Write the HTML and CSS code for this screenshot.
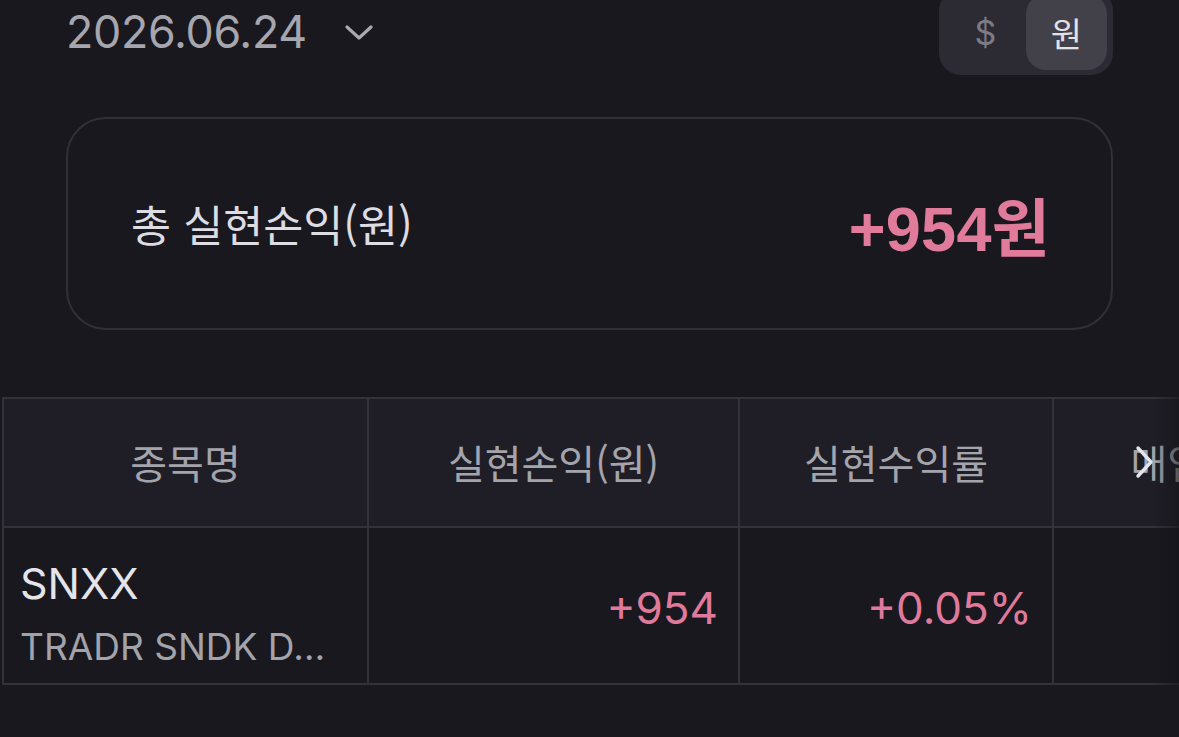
FILE: index.html
```html
<!DOCTYPE html>
<html lang="ko">
<head>
<meta charset="utf-8">
<title>실현손익</title>
<link rel="stylesheet" href="styles.css">
</head>
<body>
<main class="screen">
  <section class="summary">
    <div class="topbar">
      <button class="date-picker" type="button">
        <span class="date-text">2026.06.24</span>
        <svg class="chevron" width="28" height="16" viewBox="0 0 28 16" aria-hidden="true">
          <path d="M2 2 L14 13 L26 2" fill="none" stroke="currentColor" stroke-width="3.2" stroke-linecap="round" stroke-linejoin="round"/>
        </svg>
      </button>
      <div class="currency-toggle">
        <span class="currency">$</span>
        <span class="currency is-active">원</span>
      </div>
    </div>

    <div class="total-card">
      <span class="total-label">총 실현손익(원)</span>
      <span class="total-value">+954원</span>
    </div>
  </section>

  <section class="table-scroll">
    <div class="pl-table">
      <div class="cell head">종목명</div>
      <div class="cell head">실현손익(원)</div>
      <div class="cell head">실현수익률</div>
      <div class="cell head">매입금액(원)</div>

      <div class="cell name-cell">
        <span class="ticker">SNXX</span>
        <span class="fund-name">TRADR SNDK DAILY 2X ETF</span>
      </div>
      <div class="cell num gain">+954</div>
      <div class="cell num gain">+0.05%</div>
      <div class="cell num"></div>
    </div>
    <svg class="scroll-hint" width="22" height="34" viewBox="0 0 22 34" aria-hidden="true">
      <path d="M4 3 L17 17 L4 31" fill="none" stroke="#e4e4ea" stroke-width="3.4" stroke-linecap="round" stroke-linejoin="round"/>
    </svg>
    <div class="scroll-fade"></div>
  </section>
</main>
</body>
</html>
```

FILE: styles.css
```css
* {
  box-sizing: border-box;
}

html, body {
  margin: 0;
  padding: 0;
  background: #19181e;
}

body {
  width: 1179px;
  height: 737px;
  overflow: hidden;
  font-family: Inter, "Noto Sans CJK KR", sans-serif;
  color: #e3e3e8;
}

.screen {
  display: flex;
  flex-direction: column;
}

/* ---------- top summary ---------- */

.summary {
  padding: 0 66px 0 66px;
  display: flex;
  flex-direction: column;
  gap: 42px;
}

.topbar {
  height: 86px;
  margin-top: -11px;
  display: flex;
  align-items: center;
  justify-content: space-between;
}

.date-picker {
  display: flex;
  align-items: center;
  gap: 38px;
  padding: 0;
  background: none;
  border: 0;
  color: #a6a6ae;
  font: inherit;
}

.date-text {
  font-size: 44.8px;
  letter-spacing: -0.3px;
  line-height: 1;
}

.chevron {
  color: #a9a9b0;
  margin-top: 2px;
}

.currency-toggle {
  display: flex;
  padding: 5px 6px;
  height: 86px;
  border-radius: 22px;
  background: #2c2b33;
}

.currency {
  width: 81px;
  display: flex;
  align-items: center;
  justify-content: center;
  border-radius: 20px;
  font-size: 34px;
  color: #7d7c85;
}

.currency.is-active {
  background: #42414a;
  color: #e2e2e7;
}

.total-card {
  height: 213px;
  border: 2px solid #313038;
  border-radius: 40px;
  padding: 0 61px 0 63px;
  display: flex;
  align-items: center;
  justify-content: space-between;
}

.total-label {
  font-family: "Noto Sans CJK KR", sans-serif;
  font-size: 43.5px;
  color: #dcdce2;
}

.total-value {
  font-family: "Liberation Sans", "Noto Sans CJK KR", sans-serif;
  font-weight: 700;
  font-size: 63px;
  color: #e17b9c;
  letter-spacing: 0.3px;
}

/* ---------- table ---------- */

.table-scroll {
  position: relative;
  margin-top: 67px;
  margin-left: 2px;
  overflow: hidden;
}

.pl-table {
  display: grid;
  grid-template-columns: 365px 371px 314px 366px;
  grid-template-rows: 129px 157px;
  width: max-content;
  border-top: 2px solid #33323a;
  border-left: 2px solid #33323a;
}

.cell {
  border-right: 2px solid #33323a;
  border-bottom: 2px solid #33323a;
  display: flex;
  align-items: center;
}

.head {
  justify-content: center;
  background: #1f1e27;
  font-family: "Noto Sans CJK KR", sans-serif;
  font-size: 40px;
  color: #a4a4ac;
  padding-bottom: 2px;
}

.name-cell {
  flex-direction: column;
  align-items: flex-start;
  justify-content: center;
  gap: 14px;
  padding: 18px 23px 0 16px;
  min-width: 0;
}

.ticker {
  font-size: 43px;
  line-height: 1.2;
  color: #e4e4e9;
}

.fund-name {
  display: block;
  max-width: 100%;
  font-size: 37px;
  line-height: 1.3;
  color: #a3a3ab;
  white-space: nowrap;
  overflow: hidden;
  text-overflow: ellipsis;
}

.num {
  justify-content: flex-end;
  padding: 4px 20px 0 0;
  font-size: 44px;
}

.gain {
  color: #e07a9b;
}

.scroll-hint {
  position: absolute;
  left: 1132px;
  top: 48px;
}

.scroll-fade {
  position: absolute;
  top: 0;
  right: 0;
  width: 26px;
  height: 100%;
  background: linear-gradient(to right, rgba(20, 19, 24, 0), rgba(20, 19, 24, 0.55));
  pointer-events: none;
}
```
